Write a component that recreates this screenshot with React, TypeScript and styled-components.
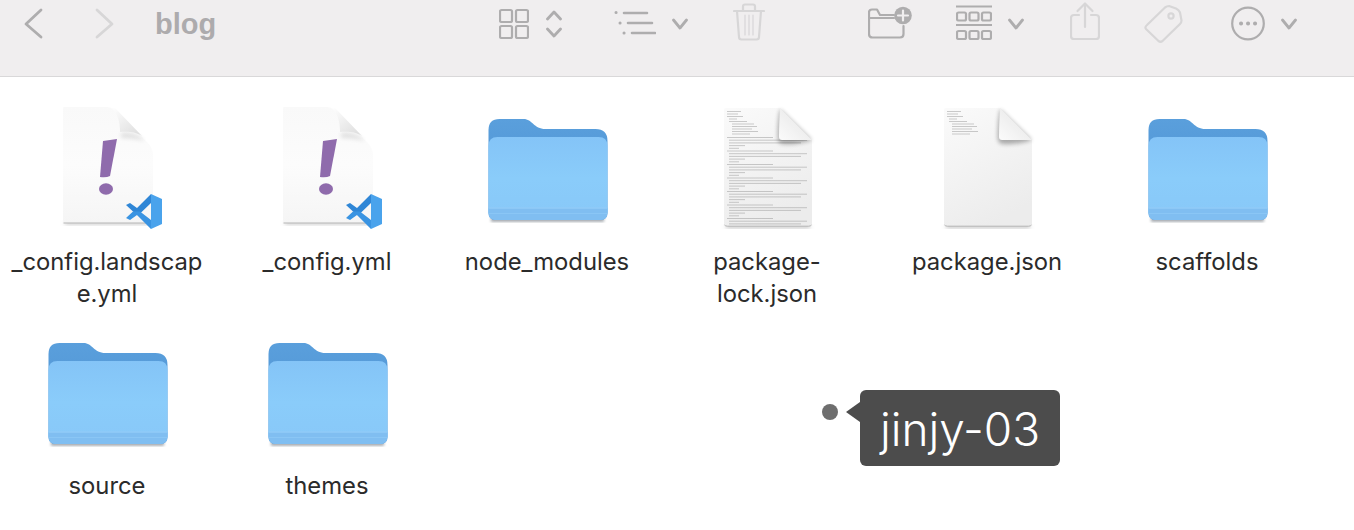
import React from "react";
import styled, { createGlobalStyle } from "styled-components";

const GlobalStyle = createGlobalStyle`
  html, body {
    margin: 0;
    background: #fff;
  }
`;

const Page = styled.div`
  position: relative;
  width: 1354px;
  height: 530px;
  overflow: hidden;
  background: #fff;
  font-family: "Inter", "Liberation Sans", sans-serif;
`;

const Toolbar = styled.header`
  display: flex;
  justify-content: space-between;
  align-items: flex-start;
  box-sizing: border-box;
  height: 77px;
  padding: 0 57px 0 22px;
  background: #f0eeef;
  border-bottom: 1px solid #d9d8d9;
`;

const ToolGroup = styled.div`
  display: flex;
  align-items: flex-start;
`;

const Title = styled.div`
  margin-left: 39px;
  font: bold 29px/48px "Liberation Sans", sans-serif;
  color: #adabad;
`;

const Tool = styled.svg<{ $gap?: number; $dim?: boolean }>`
  display: block;
  flex: none;
  height: 44px;
  margin-left: ${(p) => p.$gap ?? 0}px;
  fill: none;
  stroke: ${(p) => (p.$dim ? "#d7d6d7" : "#aeadae")};
  stroke-width: 2.2;
  stroke-linecap: round;
  stroke-linejoin: round;
`;

const FileGrid = styled.main`
  display: grid;
  grid-template-columns: repeat(6, 220px);
  grid-auto-rows: 210px;
  row-gap: 14px;
  margin-left: -3px;
  padding-top: 23px;
`;

const Item = styled.div`
  display: flex;
  flex-direction: column;
  align-items: center;
`;

const Thumb = styled.svg`
  display: block;
  width: 140px;
  height: 130px;
  margin-bottom: 16px;
`;

const Label = styled.div`
  width: 198px;
  font-size: 23.8px;
  line-height: 32px;
  color: #2b2b2b;
  text-align: center;
  overflow-wrap: anywhere;
`;

const Marker = styled.div`
  position: absolute;
  left: 822px;
  top: 390px;
  display: flex;
  align-items: flex-start;
`;

const Dot = styled.span`
  width: 16px;
  height: 16px;
  margin-top: 14px;
  border-radius: 50%;
  background: #6e6e6e;
`;

const Bubble = styled.div`
  position: relative;
  box-sizing: border-box;
  width: 200px;
  height: 76px;
  margin-left: 22px;
  border-radius: 6px;
  background: #4c4c4c;
  color: #fff;
  font-size: 46px;
  font-weight: 300;
  line-height: 78px;
  text-align: center;

  &::before {
    content: "";
    position: absolute;
    left: -14px;
    top: 12px;
    border-style: solid;
    border-width: 10px 14px 10px 0;
    border-color: transparent #4c4c4c transparent transparent;
  }
`;

const Chevron = ({ gap }: { gap: number }) => (
  <Tool $gap={gap} width={16} viewBox="0 0 16 44" style={{ strokeWidth: 2.8 }}>
    <polyline points="1.5,20 8,28 14.5,20" />
  </Tool>
);

const Folder = () => (
  <Thumb viewBox="0 0 140 130">
    <defs>
      <linearGradient id="folderBack" x1="0" y1="0" x2="0" y2="1">
        <stop offset="0" stopColor="#5a9fdc" />
        <stop offset="1" stopColor="#4a8fd0" />
      </linearGradient>
      <linearGradient id="folderFront" x1="0" y1="0" x2="0" y2="1">
        <stop offset="0" stopColor="#84c4f7" />
        <stop offset="0.5" stopColor="#8accfa" />
        <stop offset="1" stopColor="#88c8f8" />
      </linearGradient>
      <filter id="folderBlur" x="-10%" y="-30%" width="120%" height="160%">
        <feGaussianBlur stdDeviation="1.4" />
      </filter>
    </defs>
    <path d="M14 118 h113 v3.4 h-113z" fill="#6f7780" opacity={0.75} filter="url(#folderBlur)" />
    <path
      d="M11.5 30 q0-11 11-11 h24 c9 0 10 10 22 10 h50 q12 0 12 12 v72 q0 7-7 7 h-105 q-7 0-7-7z"
      fill="url(#folderBack)"
    />
    <path d="M11.5 46 q0-9 9-9 h101 q9 0 9 9 v66 q0 8-8 8 h-103 q-8 0-8-8z" fill="url(#folderFront)" />
    <path d="M11.5 108 h119 v4 q0 8-8 8 h-103 q-8 0-8-8z" fill="#80bef1" />
    <rect x="11.5" y="107.5" width="119" height="1.2" fill="#93ccf8" />
    <rect x="12" y="113" width="118" height="1" fill="#8ac6f5" />
  </Thumb>
);

const YamlFile = ({ id }: { id: string }) => (
  <Thumb viewBox="0 0 140 130">
    <defs>
      <linearGradient id={`flap${id}`} x1="0.1" y1="0" x2="0.9" y2="0.9">
        <stop offset="0" stopColor="#fdfdfd" />
        <stop offset="1" stopColor="#dfdfdf" />
      </linearGradient>
      <linearGradient id={`paper${id}`} x1="0" y1="0" x2="0" y2="1">
        <stop offset="0" stopColor="#f9f9f9" />
        <stop offset="0.5" stopColor="#fcfcfc" />
        <stop offset="1" stopColor="#f5f5f5" />
      </linearGradient>
      <filter id={`soft${id}`} x="-30%" y="-60%" width="160%" height="220%">
        <feGaussianBlur stdDeviation="2" />
      </filter>
    </defs>
    <path d="M28 122 h86 v2 h-86z" fill="#a9a9a9" filter={`url(#soft${id})`} />
    <path
      d="M27 7 h41 c6 0 10 2 14 6 l27 28 c5 5 7 9 7 15 v65 q0 2-2 2 h-86 q-2 0-2-2 v-112 q0-2 1-2z"
      fill={`url(#paper${id})`}
    />
    <path d="M26.5 123 h89" stroke="#b5b5b5" strokeWidth="1" />
    <path d="M84 33 c8-1 16 0 24 8 c-8-2-16-3-24-3z" fill="#000" opacity={0.1} filter={`url(#soft${id})`} />
    <path d="M74 8 c7 5 9 14 9 24 c8-1 17 0 22 4 l-26-27 c-1-1-3-1-5-1z" fill={`url(#flap${id})`} />
    <path d="M66 41 l14-2 l-7 37 q-4 2-10 1z" fill="#8f6bac" />
    <ellipse cx="69" cy="89" rx="7" ry="5.8" fill="#8f6bac" />
    <g transform="translate(89 94)">
      <path d="M25 0 L36 5 V30 L25 35z" fill="#4aa3ec" />
      <path d="M25 0 L11 14 L4 9 L0 11 L7 17.5 L12 21.5 L25 9z" fill="#2f86d6" />
      <path d="M7 17.5 L0 24 L4 26 L11 21 L25 35 V26 L14 17.5z" fill="#3a94e2" />
    </g>
  </Thumb>
);

type Line = [number, number, number];

const headLines: Line[] = [
  [30, 11, 14], [30, 13.5, 11], [30, 16, 16], [32, 18.5, 8], [32, 21, 18], [35, 23.5, 22],
  [35, 26, 25], [35, 28.5, 20], [35, 31, 26], [35, 33.5, 18],
];

// repeating blocks of a lock file: name, url, hash, closing brace
const lockBlock = [46, 78, 72, 16, 10];
const bodyLines: Line[] = [];
for (let y = 37, i = 0; y < 124; y += 2.7, i++) {
  const width = lockBlock[i % lockBlock.length];
  bodyLines.push([i % lockBlock.length === 0 ? 30 : 32, y, width]);
}

const DocFile = ({ id, lines }: { id: string; lines: Line[] }) => (
  <Thumb viewBox="0 0 140 130">
    <defs>
      <linearGradient id={`sheet${id}`} x1="0.1" y1="0" x2="0.5" y2="1">
        <stop offset="0" stopColor="#fafafa" />
        <stop offset="1" stopColor="#ececec" />
      </linearGradient>
      <linearGradient id={`fold${id}`} x1="0" y1="1" x2="1" y2="0">
        <stop offset="0" stopColor="#fbfbfb" />
        <stop offset="1" stopColor="#e2e2e2" />
      </linearGradient>
      <filter id={`blur${id}`} x="-30%" y="-30%" width="170%" height="170%">
        <feGaussianBlur stdDeviation="2.2" />
      </filter>
    </defs>
    <path d="M29 125.5 h84 v2.2 h-84z" fill="#a5a5a5" filter={`url(#blur${id})`} />
    <path
      d="M29 8 h54 l32 32 v83 q0 3-3 3 h-82 q-3 0-3-3 v-113 q0-2 2-2z"
      fill={`url(#sheet${id})`}
    />
    <path d="M27.5 125 q1 1.2 3 1.2 h81 q2 0 3-1.2" fill="none" stroke="#b5b5b5" strokeWidth="1" />
    {lines.map(([x, y, w], i) => (
      <rect key={i} x={x} y={y} width={w} height="1" fill="#8e8e8e" opacity={0.45} />
    ))}
    <path d="M83 9 q-3 16-2 31 q1 4 5 4 q14 1 29-4" fill="#000" opacity={0.3} filter={`url(#blur${id})`} />
    <path d="M83 8 q-1 18-1 29 q0 3 3 3 h30z" fill={`url(#fold${id})`} />
  </Thumb>
);

const files = [
  { name: "_config.landscape.yml", icon: <YamlFile id="a" /> },
  { name: "_config.yml", icon: <YamlFile id="b" /> },
  { name: "node_modules", icon: <Folder /> },
  { name: "package-lock.json", icon: <DocFile id="lock" lines={[...headLines, ...bodyLines]} /> },
  { name: "package.json", icon: <DocFile id="pkg" lines={headLines} /> },
  { name: "scaffolds", icon: <Folder /> },
  { name: "source", icon: <Folder /> },
  { name: "themes", icon: <Folder /> },
];

const App = () => (
  <Page>
    <GlobalStyle />
    <Toolbar>
      <ToolGroup>
        <Tool width={22} viewBox="0 0 22 44" style={{ strokeWidth: 2.8 }}>
          <polyline points="19,10 4,24 19,37" />
        </Tool>
        <Tool $gap={50} $dim width={22} viewBox="0 0 22 44" style={{ strokeWidth: 2.8 }}>
          <polyline points="3,10 18,24 3,37" />
        </Tool>
        <Title>blog</Title>
      </ToolGroup>
      <ToolGroup>
        <Tool width={30} viewBox="0 0 30 44">
          <rect x="1" y="10" width="12" height="12" rx="1.5" />
          <rect x="17" y="10" width="12" height="12" rx="1.5" />
          <rect x="1" y="26" width="12" height="12" rx="1.5" />
          <rect x="17" y="26" width="12" height="12" rx="1.5" />
        </Tool>
        <Tool $gap={17} width={16} viewBox="0 0 16 44" style={{ strokeWidth: 2.8 }}>
          <polyline points="1.5,19 8,12 14.5,19" />
          <polyline points="1.5,29 8,36 14.5,29" />
        </Tool>
        <Tool $gap={52} width={42} viewBox="0 0 42 44">
          <path d="M10 13 H33 M14 23 H38 M18 33 H41" strokeWidth="2.6" />
          <path d="M2 12.5 h.1 M6 23 h.1 M10 33 h.1" strokeWidth="3" />
        </Tool>
        <Chevron gap={16} />
        <Tool $gap={45} $dim width={32} viewBox="0 0 32 44">
          <path d="M1 11 H31 M10 11 V6.5 q0-2 2-2 h8 q2 0 2 2 V11" />
          <path d="M4 11 l2 26 q0 2.5 2.5 2.5 h15 q2.5 0 2.5-2.5 l2-26" />
          <path d="M12 15 V35 M16 15 V35 M20 15 V35" strokeWidth="1.2" />
        </Tool>
        <Tool $gap={103} width={44} viewBox="0 0 44 44">
          <path d="M26 15 H12 L9 9.5 H4 q-3 0-3 3 V34 q0 3.5 3.5 3.5 H32 q3.5 0 3.5-3.5 V26" />
          <path d="M1 18 H26" />
          <circle cx="35" cy="15.5" r="8.8" fill="#aeadae" stroke="none" />
          <path d="M35 10.5 V20.5 M30 15.5 H40" stroke="#f0eeef" />
        </Tool>
        <Tool $gap={44} width={36} viewBox="0 0 36 44">
          <path d="M0 6.5 H36 M0 25 H36" />
          <rect x="1" y="12.5" width="9" height="8" rx="1.5" />
          <rect x="13.5" y="12.5" width="9" height="8" rx="1.5" />
          <rect x="26" y="12.5" width="9" height="8" rx="1.5" />
          <rect x="1" y="31" width="9" height="8" rx="1.5" />
          <rect x="13.5" y="31" width="9" height="8" rx="1.5" />
          <rect x="26" y="31" width="9" height="8" rx="1.5" />
        </Tool>
        <Chevron gap={16} />
        <Tool $gap={46} $dim width={30} viewBox="0 0 30 44">
          <path d="M15 4 V27 M7.5 11 L15 3.5 L22.5 11" />
          <path d="M9 15 H4 q-3 0-3 3 V36 q0 3 3 3 H26 q3 0 3-3 V18 q0-3-3-3 H21" />
        </Tool>
        <Tool $gap={44} $dim width={40} viewBox="0 0 40 44">
          <path d="M3 25 L21 7.5 q2-1.5 4-1.5 l7 2.5 q3 1.5 4 4 l1.5 8 q0 2-1.5 3.5 L18.5 41 q-2 1.5-4 0 L2 29 q-1.5-2 1-4z" />
          <circle cx="27" cy="16" r="2.6" />
        </Tool>
        <Tool $gap={47} width={34} viewBox="0 0 34 44">
          <circle cx="17" cy="23.5" r="15.8" />
          <path d="M10 23.5 h.1 M17 23.5 h.1 M24 23.5 h.1" strokeWidth="4" />
        </Tool>
        <Chevron gap={16} />
      </ToolGroup>
    </Toolbar>
    <FileGrid>
      {files.map((file) => (
        <Item key={file.name}>
          {file.icon}
          <Label>{file.name}</Label>
        </Item>
      ))}
    </FileGrid>
    <Marker>
      <Dot />
      <Bubble>jinjy-03</Bubble>
    </Marker>
  </Page>
);

export default App;
